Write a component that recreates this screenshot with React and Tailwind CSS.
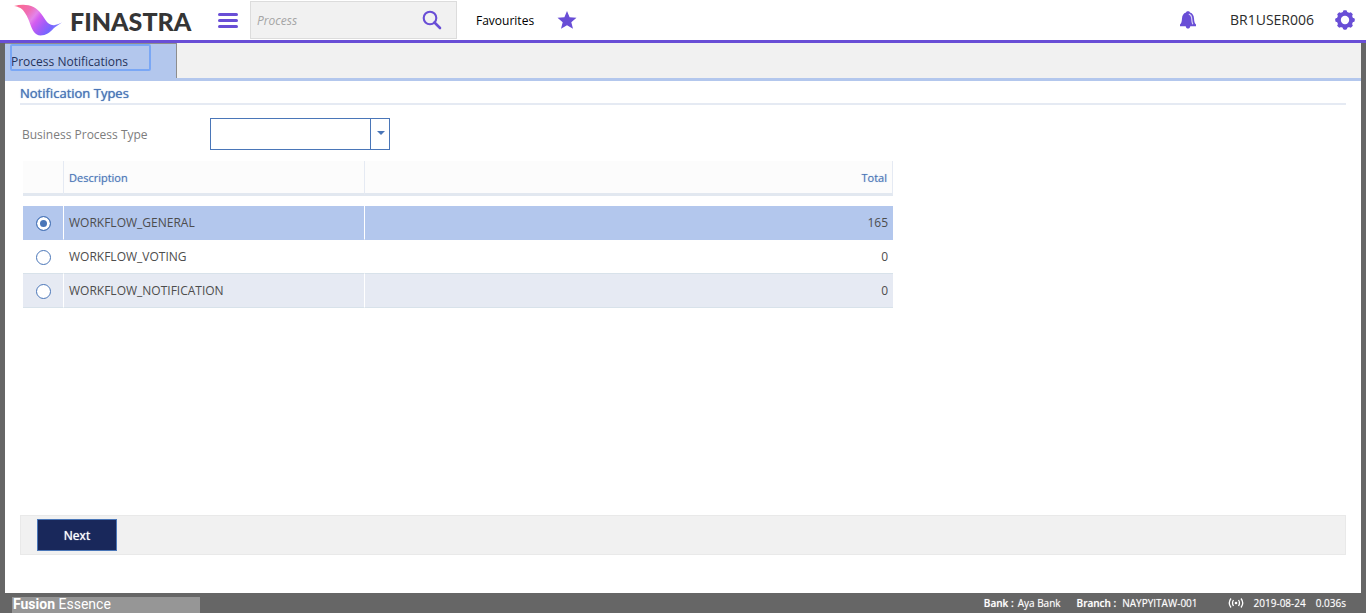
import { useState } from 'react';

const rows = [
  { name: 'WORKFLOW_GENERAL', total: 165 },
  { name: 'WORKFLOW_VOTING', total: 0 },
  { name: 'WORKFLOW_NOTIFICATION', total: 0 },
];

function Logo() {
  return (
    <a href="#home" aria-label="Finastra" className="flex items-center gap-2">
      <svg viewBox="0 0 48 32" className="h-8 w-12 shrink-0" aria-hidden="true">
        <defs>
          <linearGradient id="wave" gradientUnits="userSpaceOnUse" x1="5" y1="1" x2="40" y2="29">
            <stop offset="0" stopColor="#fb6a92" />
            <stop offset="0.25" stopColor="#ef6db4" />
            <stop offset="0.42" stopColor="#e384ea" />
            <stop offset="0.52" stopColor="#d45df0" />
            <stop offset="0.7" stopColor="#a35cf8" />
            <stop offset="0.88" stopColor="#7566ff" />
            <stop offset="1" stopColor="#8a88ff" />
          </linearGradient>
        </defs>
        <path
          d="M0 2C7 .2 14 .3 19.500 3C25.500 6.200 28.500 11.500 31.500 16C34 19.800 37 21.800 41 21C43.500 20.600 45.500 19.800 48 18.600C44 21.300 42 22.400 39.500 24.500C36 28.500 32 31.500 26.500 31.500C21 31 18.500 26.500 16.700 21.500C15 16.500 13.500 12.500 11 9C8.500 4.500 5 2.800 0 2Z"
          fill="url(#wave)"
        />
      </svg>
      <span className="pt-0.5 font-[Lato] text-[25px] leading-8 font-black text-[#353535]">FINASTRA</span>
    </a>
  );
}

function Header() {
  return (
    <header className="flex h-[43px] items-center border-b-3 border-[#694ed6] bg-white pr-[10px] pl-[14px] text-xs text-black">
      <div className="w-[204px]">
        <Logo />
      </div>
      <button type="button" aria-label="Menu" className="flex w-5 flex-col gap-[3px]">
        <span className="h-[3px] w-full rounded-xs bg-[#694ed6]" />
        <span className="h-[3px] w-full rounded-xs bg-[#694ed6]" />
        <span className="h-[3px] w-full rounded-xs bg-[#694ed6]" />
      </button>
      <div className="ml-3 flex h-[38px] w-[207px] items-center border border-[#dcdcdc] bg-[#f1f1f1] pr-[14px] pl-1.5">
        <input
          type="text"
          aria-label="Process"
          placeholder="Process"
          className="w-full min-w-0 bg-transparent pt-0.5 italic outline-none placeholder:text-[#a5a5a5]"
        />
        <button type="button" aria-label="Search" className="shrink-0">
          <svg viewBox="0 0 20 20" className="size-5" fill="none" stroke="#694ed6" aria-hidden="true">
            <circle cx="8" cy="8" r="6.300" strokeWidth="2.100" />
            <path d="M12.500 12.500L18 18" strokeWidth="2.600" strokeLinecap="round" />
          </svg>
        </button>
      </div>
      <a href="#favourites" className="ml-[19px] flex items-center gap-[23px]">
        <span className="pt-0.5">Favourites</span>
        <svg viewBox="0 0 20 20" className="size-5" fill="#694ed6" aria-hidden="true">
          <path d="M10 1L12.600 7.200L19.500 7.700L14.300 12.200L16 18.800L10 15.300L4 18.800L5.700 12.200L.5 7.700L7.400 7.200Z" />
        </svg>
      </a>
      <div className="ml-auto flex items-center">
        <button type="button" aria-label="Notifications">
          <svg viewBox="0 0 18 18" className="size-[18px]" aria-hidden="true">
            <path
              d="M9 .3C10 .3 10.800 .8 11 1.600C13.600 2.400 14.800 4.500 15 7.500C15.200 10.500 15.600 12.300 17 13.600V15.300H1V13.600C2.400 12.300 2.800 10.500 3 7.500C3.200 4.500 4.400 2.400 7 1.600C7.200 .8 8 .3 9 .3ZM6.700 15.300H11.300C11 17 10.200 17.600 9 17.600S7 17 6.700 15.300Z"
              fill="#694ed6"
            />
            <path d="M9.800 3.200C12.400 3.800 12.700 6 12.800 8.500C12.900 10.500 13.100 12 13.800 13.300" fill="none" stroke="#d9d2f6" strokeWidth="1.200" />
          </svg>
        </button>
        <span className="ml-[33px] text-[14px] text-[#2b2b2b]">BR1USER006</span>
        <button type="button" aria-label="Settings" className="ml-5">
          <svg viewBox="0 0 22 22" className="size-[22px]" aria-hidden="true">
            <g fill="#694ed6">
              <circle cx="11" cy="11" r="8.200" />
              {[0, 45, 90, 135].map((angle) => (
                <rect key={angle} x="8.900" y="1.300" width="4.200" height="19.400" rx="1.400" transform={`rotate(${angle} 11 11)`} />
              ))}
            </g>
            <circle cx="11" cy="11" r="4.200" fill="#fff" />
          </svg>
        </button>
      </div>
    </header>
  );
}

function NotificationTable() {
  const [selected, setSelected] = useState('WORKFLOW_GENERAL');
  return (
    <table className="w-[870px] max-w-full table-fixed border-separate border-spacing-0 text-xs text-[#4d4d4d]">
      <colgroup>
        <col className="w-[41px]" />
        <col className="w-[301px]" />
        <col />
      </colgroup>
      <thead>
        <tr className="h-[35px] bg-[#fcfcfc] text-[11px] text-[#4a76b8] text-shadow-[0_0_1px_#4a76b880] [&>th]:border-r [&>th]:border-r-[#e5eaf3] [&>th]:border-b-3 [&>th]:border-b-[#e2e8f0] [&>th]:pt-0.5 [&>th]:font-normal">
          <th aria-label="Select" />
          <th className="px-[5px] text-left">Description</th>
          <th className="px-[5px] text-right">Total</th>
        </tr>
      </thead>
      <tbody>
        <tr aria-hidden="true" className="h-[10px]">
          <td colSpan={3} className="p-0" />
        </tr>
        {rows.map((row, index) => (
          <tr
            key={row.name}
            className={
              selected === row.name
                ? 'h-[34px] bg-[#b3c7ed] [&>td]:border-b [&>td]:border-b-[#b3c7ed]'
                : index % 2 === 0
                  ? 'h-[34px] bg-[#e6eaf3] [&>td]:border-b [&>td]:border-b-[#d8e2ea]'
                  : 'h-[34px] bg-white [&>td]:border-b [&>td]:border-b-[#d8e2ea]'
            }
          >
            <td className="border-r border-r-white pt-0.5 pb-0">
              <input
                type="radio"
                name="notification"
                aria-label={row.name}
                checked={selected === row.name}
                onChange={() => setSelected(row.name)}
                className="mx-auto block size-[15px] appearance-none rounded-full border border-[#4a76b8] bg-white checked:bg-[#4a76b8] checked:shadow-[inset_0_0_0_3px_white]"
              />
            </td>
            <td className="border-r border-r-white px-[5px] py-0">{row.name}</td>
            <td className="px-[5px] py-0 text-right">{row.total}</td>
          </tr>
        ))}
      </tbody>
    </table>
  );
}

export default function App() {
  return (
    <div className="flex min-h-screen flex-col bg-[#666666] font-['Open_Sans',sans-serif]">
      <Header />
      <div className="mx-[5px] flex grow flex-col bg-white">
        <nav className="flex h-[38px] border-b-3 border-[#b3c7ed] bg-[#f1f1f1]">
          <div className="w-[172px] border-t border-r border-[#8d8d8d] bg-[#b3c7ed] pl-[5px]">
            <a
              href="#notifications"
              className="flex h-[27px] w-[141px] items-end rounded-xs pl-px text-xs leading-[18px] text-[#25335c] outline-2 -outline-offset-2 outline-[#7aa7f5]"
            >
              Process Notifications
            </a>
          </div>
        </nav>
        <main className="flex grow flex-col px-[15px] pb-[38px]">
          <h1 className="border-b-2 border-[#e5eaf3] pt-0.5 text-[13px] leading-5 text-[#4a76b8] text-shadow-[0_0_1px_#4a76b8]">
            Notification Types
          </h1>
          <div className="mt-[13px] flex items-center pl-0.5">
            <label htmlFor="process-type" className="w-[188px] pt-0.5 text-xs text-[#7d7d7d]">
              Business Process Type
            </label>
            <div className="relative h-8 w-[180px]">
              <select id="process-type" className="size-full appearance-none border border-[#4a76b8] bg-white pr-6 pl-2 text-xs">
                <option value=""></option>
              </select>
              <span className="pointer-events-none absolute inset-y-0 right-0 flex w-5 items-center justify-center border-l border-[#4a76b8]">
                <svg viewBox="0 0 8 4" className="mb-0.5 h-1 w-2" fill="#4a76b8" aria-hidden="true">
                  <path d="M0 0H8L4 4Z" />
                </svg>
              </span>
            </div>
          </div>
          <div className="mt-[11px] ml-[3px]">
            <NotificationTable />
          </div>
          <div className="mt-auto border border-[#e9e9e9] bg-[#f1f1f1] px-4 py-[3px]">
            <button
              type="button"
              className="block h-8 w-20 border border-[#4a76b8] bg-[#19285b] pt-0.5 text-xs text-white text-shadow-[0_0_1px_white]"
            >
              Next
            </button>
          </div>
        </main>
      </div>
      <footer className="flex h-5 items-end justify-between pr-5 pl-3 text-white">
        <div className="h-4 w-[188px] bg-[#969696] pl-px font-[Roboto] text-sm leading-[15px]">
          <strong className="font-bold">Fusion</strong> Essence
        </div>
        <div className="flex h-5 items-center text-[10px] leading-5 text-shadow-[0_0_1px_#ffffff80]">
          <strong className="font-semibold">Bank&nbsp;:</strong>
          <span className="ml-1">Aya Bank</span>
          <strong className="ml-4 font-semibold">Branch&nbsp;:</strong>
          <span className="ml-1.5">NAYPYITAW-001</span>
          <svg viewBox="0 0 16 10" className="ml-[30px] h-2.5 w-4" fill="none" stroke="#fff" strokeWidth="1.300" aria-hidden="true">
            <circle cx="8" cy="5" r="1.300" fill="#fff" stroke="none" />
            <path d="M3 .5Q-.5 5 3 9.500M5.500 2Q3.500 5 5.500 8M13 .5Q16.500 5 13 9.500M10.500 2Q12.500 5 10.500 8" />
          </svg>
          <span className="ml-2.5">2019-08-24</span>
          <span className="ml-2.5">0.036s</span>
        </div>
      </footer>
    </div>
  );
}
